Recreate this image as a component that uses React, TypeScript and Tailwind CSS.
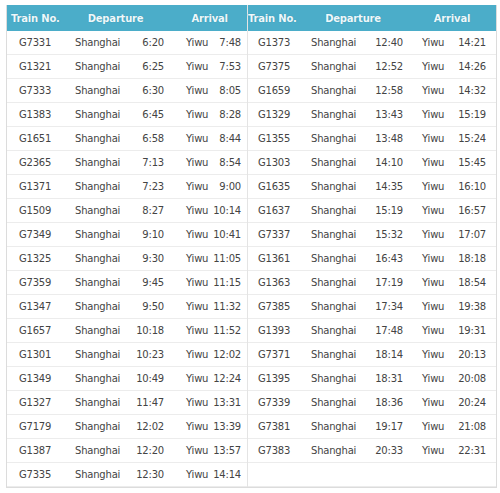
type Train = [string, string, string]

const leftTrains: Train[] = [
  ['G7331', '6:20', '7:48'],
  ['G1321', '6:25', '7:53'],
  ['G7333', '6:30', '8:05'],
  ['G1383', '6:45', '8:28'],
  ['G1651', '6:58', '8:44'],
  ['G2365', '7:13', '8:54'],
  ['G1371', '7:23', '9:00'],
  ['G1509', '8:27', '10:14'],
  ['G7349', '9:10', '10:41'],
  ['G1325', '9:30', '11:05'],
  ['G7359', '9:45', '11:15'],
  ['G1347', '9:50', '11:32'],
  ['G1657', '10:18', '11:52'],
  ['G1301', '10:23', '12:02'],
  ['G1349', '10:49', '12:24'],
  ['G1327', '11:47', '13:31'],
  ['G7179', '12:02', '13:39'],
  ['G1387', '12:20', '13:57'],
  ['G7335', '12:30', '14:14'],
]

const rightTrains: Train[] = [
  ['G1373', '12:40', '14:21'],
  ['G7375', '12:52', '14:26'],
  ['G1659', '12:58', '14:32'],
  ['G1329', '13:43', '15:19'],
  ['G1355', '13:48', '15:24'],
  ['G1303', '14:10', '15:45'],
  ['G1635', '14:35', '16:10'],
  ['G1637', '15:19', '16:57'],
  ['G7337', '15:32', '17:07'],
  ['G1361', '16:43', '18:18'],
  ['G1363', '17:19', '18:54'],
  ['G7385', '17:34', '19:38'],
  ['G1393', '17:48', '19:31'],
  ['G7371', '18:14', '20:13'],
  ['G1395', '18:31', '20:08'],
  ['G7339', '18:36', '20:24'],
  ['G7381', '19:17', '21:08'],
  ['G7383', '20:33', '22:31'],
]

function LeftHalf() {
  return (
    <div className="w-[241px] border-r border-[#e4e4e4]">
      <div className="flex h-[26px] items-center bg-[#4badc9] text-[10px] font-bold text-[#eef8fb] [text-shadow:0_0_1px_#2f8aa5]">
        <div className="w-[62px] pl-[4px]">Train No.</div>
        <div className="w-[94px] text-center">Departure</div>
        <div className="w-[10px]" />
        <div className="w-[75px] text-center">Arrival</div>
      </div>
      {leftTrains.map(([no, dep, arr]) => (
        <div key={no} className="flex h-[24px] items-center border-b border-[#ececec]">
          <div className="w-[68px] pl-[12px]">{no}</div>
          <div className="flex w-[89px] justify-between">
            <span>Shanghai</span>
            <span>{dep}</span>
          </div>
          <div className="w-[22px]" />
          <div className="flex w-[55px] justify-between">
            <span>Yiwu</span>
            <span>{arr}</span>
          </div>
        </div>
      ))}
    </div>
  )
}

function RightHalf() {
  return (
    <div className="w-[248px]">
      <div className="flex h-[26px] items-center bg-[#4badc9] text-[10px] font-bold text-[#eef8fb] [text-shadow:0_0_1px_#2f8aa5]">
        <div className="w-[58px]">Train No.</div>
        <div className="w-[94px] text-center">Departure</div>
        <div className="w-[8px]" />
        <div className="w-[88px] text-center">Arrival</div>
      </div>
      {rightTrains.map(([no, dep, arr]) => (
        <div key={no} className="flex h-[24px] items-center border-b border-[#ececec]">
          <div className="w-[63px] pl-[10px]">{no}</div>
          <div className="flex w-[92px] justify-between">
            <span>Shanghai</span>
            <span>{dep}</span>
          </div>
          <div className="w-[19px]" />
          <div className="flex w-[64px] justify-between">
            <span>Yiwu</span>
            <span>{arr}</span>
          </div>
        </div>
      ))}
      <div className="h-[24px] border-b border-[#ececec]" />
    </div>
  )
}

export default function App() {
  return (
    <div className="h-[493px] w-[500px] bg-white pl-[6px] pt-[5px] font-['DejaVu_Sans',sans-serif] text-[10px] tracking-[-0.2px] text-[#444]">
      <div className="flex w-[491px] border-x border-b border-[#dcdcdc]">
        <LeftHalf />
        <RightHalf />
      </div>
    </div>
  )
}
